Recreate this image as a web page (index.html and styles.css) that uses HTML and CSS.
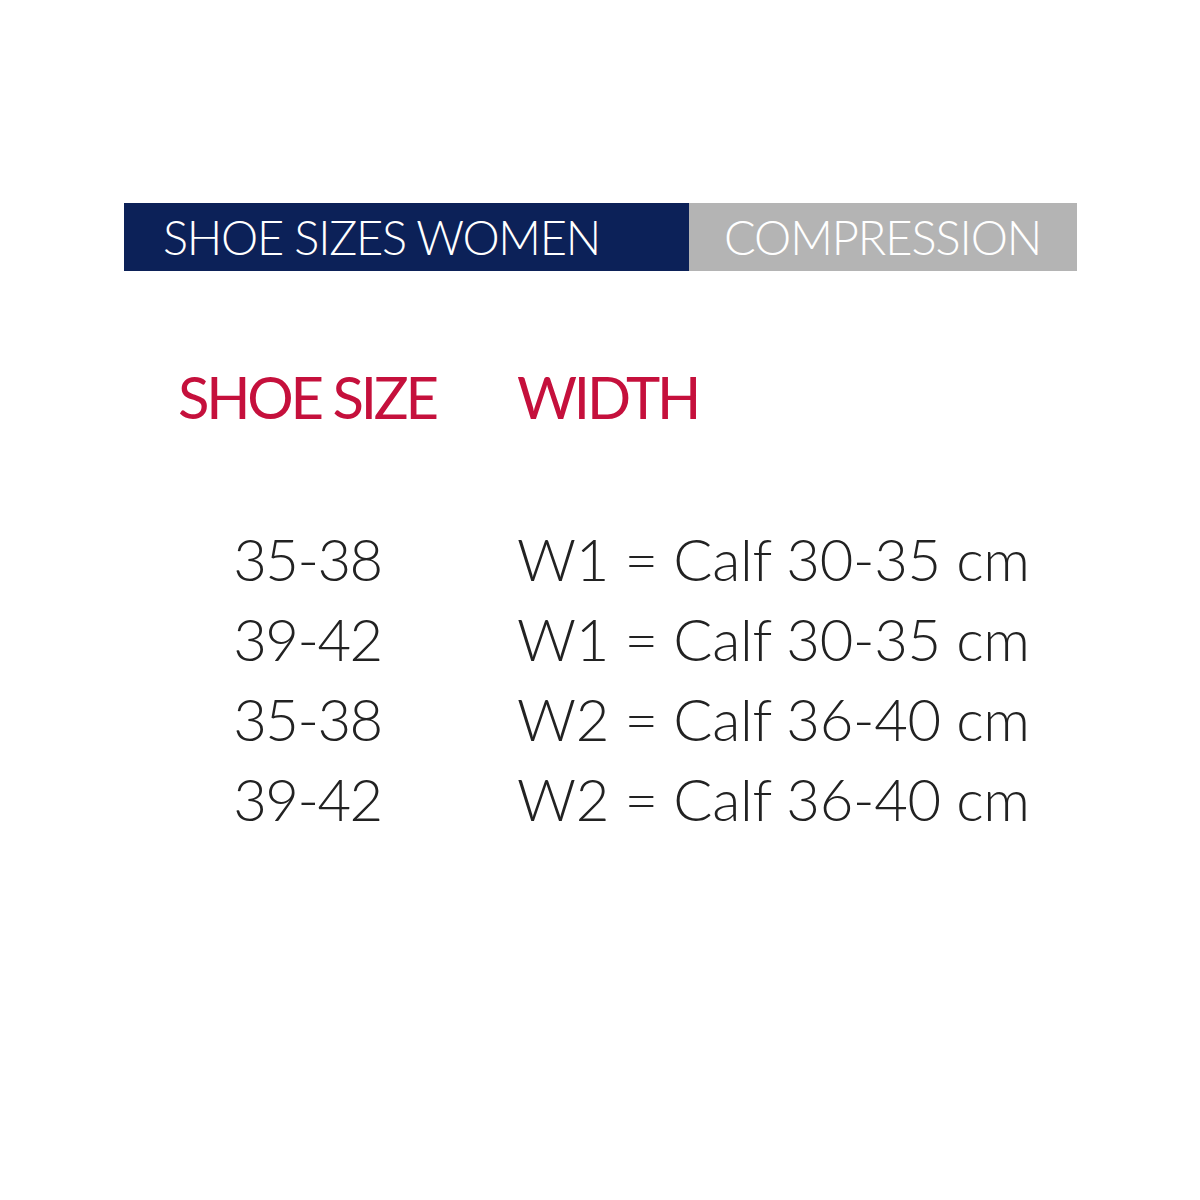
FILE: index.html
```html
<!DOCTYPE html>
<html>
<head>
<meta charset="utf-8">
<link rel="stylesheet" href="styles.css">
</head>
<body>
<div class="page">
  <div class="tabs">
    <div class="tab tab-active">SHOE SIZES WOMEN</div>
    <div class="tab tab-muted">COMPRESSION</div>
  </div>
  <div class="table">
    <div class="head">SHOE SIZE</div>
    <div class="head">WIDTH</div>
    <div class="rows">
      <div class="size">35-38</div><div class="width">W1 = Calf 30-35 cm</div>
      <div class="size">39-42</div><div class="width">W1 = Calf 30-35 cm</div>
      <div class="size">35-38</div><div class="width">W2 = Calf 36-40 cm</div>
      <div class="size">39-42</div><div class="width">W2 = Calf 36-40 cm</div>
    </div>
  </div>
</div>
</body>
</html>
```
FILE: styles.css
```css
html, body {
  margin: 0;
  background: #ffffff;
}
.page {
  padding: 203px 0 0 124px;
  font-family: Lato, "Liberation Sans", sans-serif;
}
.tabs {
  display: flex;
  width: 953px;
  height: 68px;
}
.tab {
  display: flex;
  align-items: center;
  color: #ffffff;
  font-size: 47px;
  font-weight: 300;
  line-height: 1;
  white-space: nowrap;
}
.tab-active {
  width: 565px;
  background: #0c2158;
  padding-left: 39px;
  box-sizing: border-box;
  letter-spacing: -1.3px;
}
.tab-muted {
  flex: 1;
  background: #b4b4b4;
  padding-left: 35px;
  letter-spacing: -1.1px;
}
.table {
  display: grid;
  grid-template-columns: 259px auto;
  column-gap: 80px;
  margin: 96px 0 0 54px;
}
.head {
  color: #c5103c;
  font-size: 58px;
  font-weight: 400;
  line-height: 60px;
  white-space: nowrap;
  letter-spacing: -3.2px;
}
.rows {
  grid-column: 1 / 3;
  display: grid;
  grid-template-columns: 259px auto;
  column-gap: 80px;
  margin-top: 92px;
}
.size, .width {
  color: #222222;
  font-size: 58px;
  font-weight: 300;
  line-height: 80px;
  white-space: nowrap;
}
.size {
  text-align: center;
  letter-spacing: -1.5px;
}
.width {
  letter-spacing: -0.3px;
}
```
